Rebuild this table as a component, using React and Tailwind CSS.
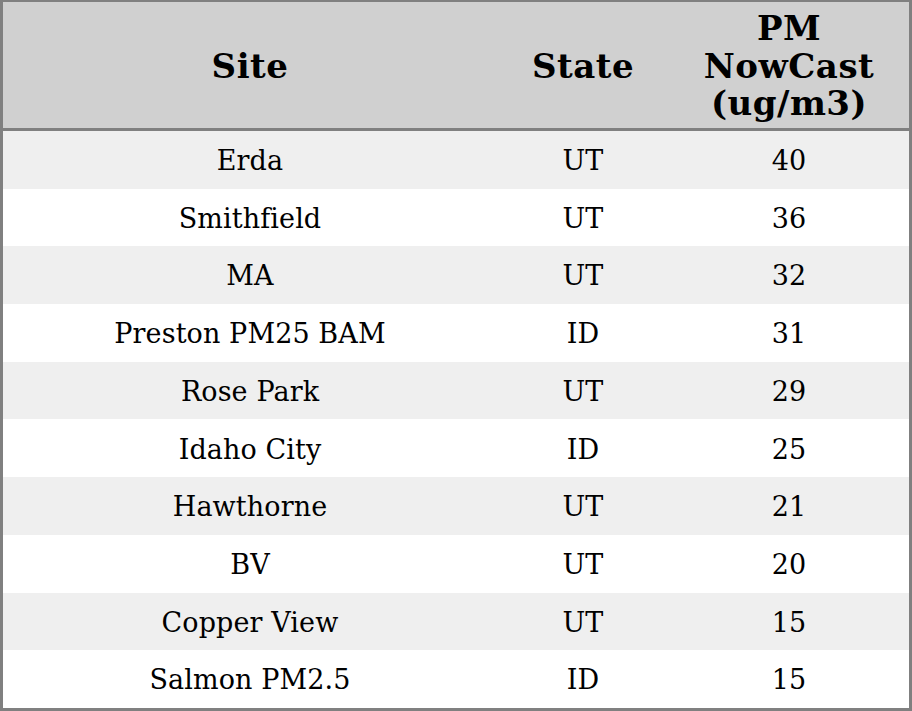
export default function App() {
  const rows = [
    ["Erda", "UT", "40"],
    ["Smithfield", "UT", "36"],
    ["MA", "UT", "32"],
    ["Preston PM25 BAM", "ID", "31"],
    ["Rose Park", "UT", "29"],
    ["Idaho City", "ID", "25"],
    ["Hawthorne", "UT", "21"],
    ["BV", "UT", "20"],
    ["Copper View", "UT", "15"],
    ["Salmon PM2.5", "ID", "15"],
  ];
  return (
    <div
      className="w-[912px] h-[711px] bg-white border-[#808080] border-x-[3px] border-t-[2px] border-b-[3px] text-black flex flex-col"
      style={{ fontFamily: '"DejaVu Serif", serif' }}
    >
      <div className="grid grid-cols-[494px_172px_1fr] bg-[#d0d0d0] border-b-[3px] border-[#808080] h-[129px] pt-[3px] items-center text-[34px] font-bold leading-[37.5px] tracking-[0.5px] text-center">
        <div>Site</div>
        <div>State</div>
        <div>
          PM
          <br />
          NowCast
          <br />
          (ug/m3)
        </div>
      </div>
      {rows.map((r, i) => (
        <div
          key={i}
          className={
            "grid grid-cols-[494px_172px_1fr] items-center text-center text-[27px] tracking-[0.1px] h-[57.7px] pt-[3px] " +
            (i % 2 === 0 ? "bg-[#efefef]" : "bg-white")
          }
        >
          <div>{r[0]}</div>
          <div>{r[1]}</div>
          <div>{r[2]}</div>
        </div>
      ))}
    </div>
  );
}
